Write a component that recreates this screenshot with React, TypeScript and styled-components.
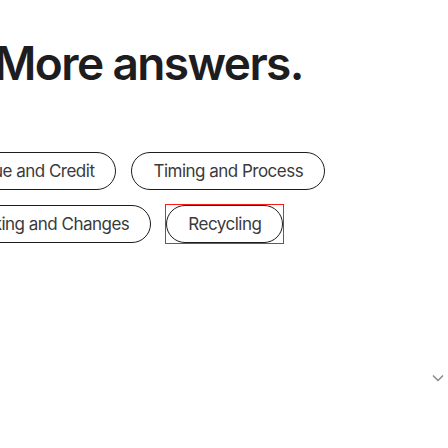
import React from 'react'
import styled, { createGlobalStyle } from 'styled-components'

const GlobalStyle = createGlobalStyle`
  html, body {
    margin: 0;
    padding: 0;
    background: #fff;
    font-family: Inter, "Noto Sans", "Liberation Sans", sans-serif;
  }
`

// rows are scrolled off to the left in the shot, so each one gets its own shift
const rows = [
  { shift: -52, chips: ['Value and Credit', 'Timing and Process'] },
  { shift: -63, chips: ['Tracking and Changes', 'Recycling'] },
]

const App = () => {
  return (
    <Page>
      <GlobalStyle />
      <Section>
        <Heading>More answers.</Heading>
        <ChipList>
          {rows.map((row, i) => (
            <ChipRow key={i} $shift={row.shift}>
              {row.chips.map((c) =>
                c === 'Recycling' ? (
                  <FocusRing key={c}>
                    <Chip>{c}</Chip>
                  </FocusRing>
                ) : (
                  <Chip key={c}>{c}</Chip>
                )
              )}
            </ChipRow>
          ))}
        </ChipList>
      </Section>
      <Footer>
        <Chevron viewBox="0 0 12 8" aria-hidden>
          <path d="M1 1.5 L6 6.5 L11 1.5" />
        </Chevron>
      </Footer>
    </Page>
  )
}

export default App

const Page = styled.div`
  width: 448px;
  height: 448px;
  overflow: hidden;
  display: flex;
  flex-direction: column;
`

const Section = styled.div`
  padding-top: 35px;
  display: flex;
  flex-direction: column;
`

const Heading = styled.h2`
  margin: 0 0 0 -6px;
  font-size: 46px;
  line-height: 56px;
  font-weight: 600;
  letter-spacing: -1.6px;
  color: #1d1d1f;
  white-space: nowrap;
`

const ChipList = styled.div`
  margin-top: 61px;
  display: flex;
  flex-direction: column;
  gap: 15px;
`

const ChipRow = styled.div<{ $shift: number }>`
  display: flex;
  gap: 15px;
  margin-left: ${(p) => p.$shift}px;
`

const FocusRing = styled.span`
  display: flex;
  flex: none;
  outline: 1px solid #ff1a1a;
`

const Chip = styled.button`
  flex: none;
  box-sizing: border-box;
  height: 38px;
  padding: 0 21px;
  border: 1px solid #1d1d1f;
  border-radius: 19px;
  background: #fff;
  font-family: inherit;
  font-size: 17px;
  letter-spacing: -0.03em;
  color: #3a3a3c;
  white-space: nowrap;
  outline: none;
`

const Footer = styled.div`
  display: flex;
  justify-content: flex-end;
  padding: 131px 4px 0 0;
`

const Chevron = styled.svg`
  width: 12px;
  height: 8px;
  fill: none;
  stroke: #86868b;
  stroke-width: 1.4;
`
